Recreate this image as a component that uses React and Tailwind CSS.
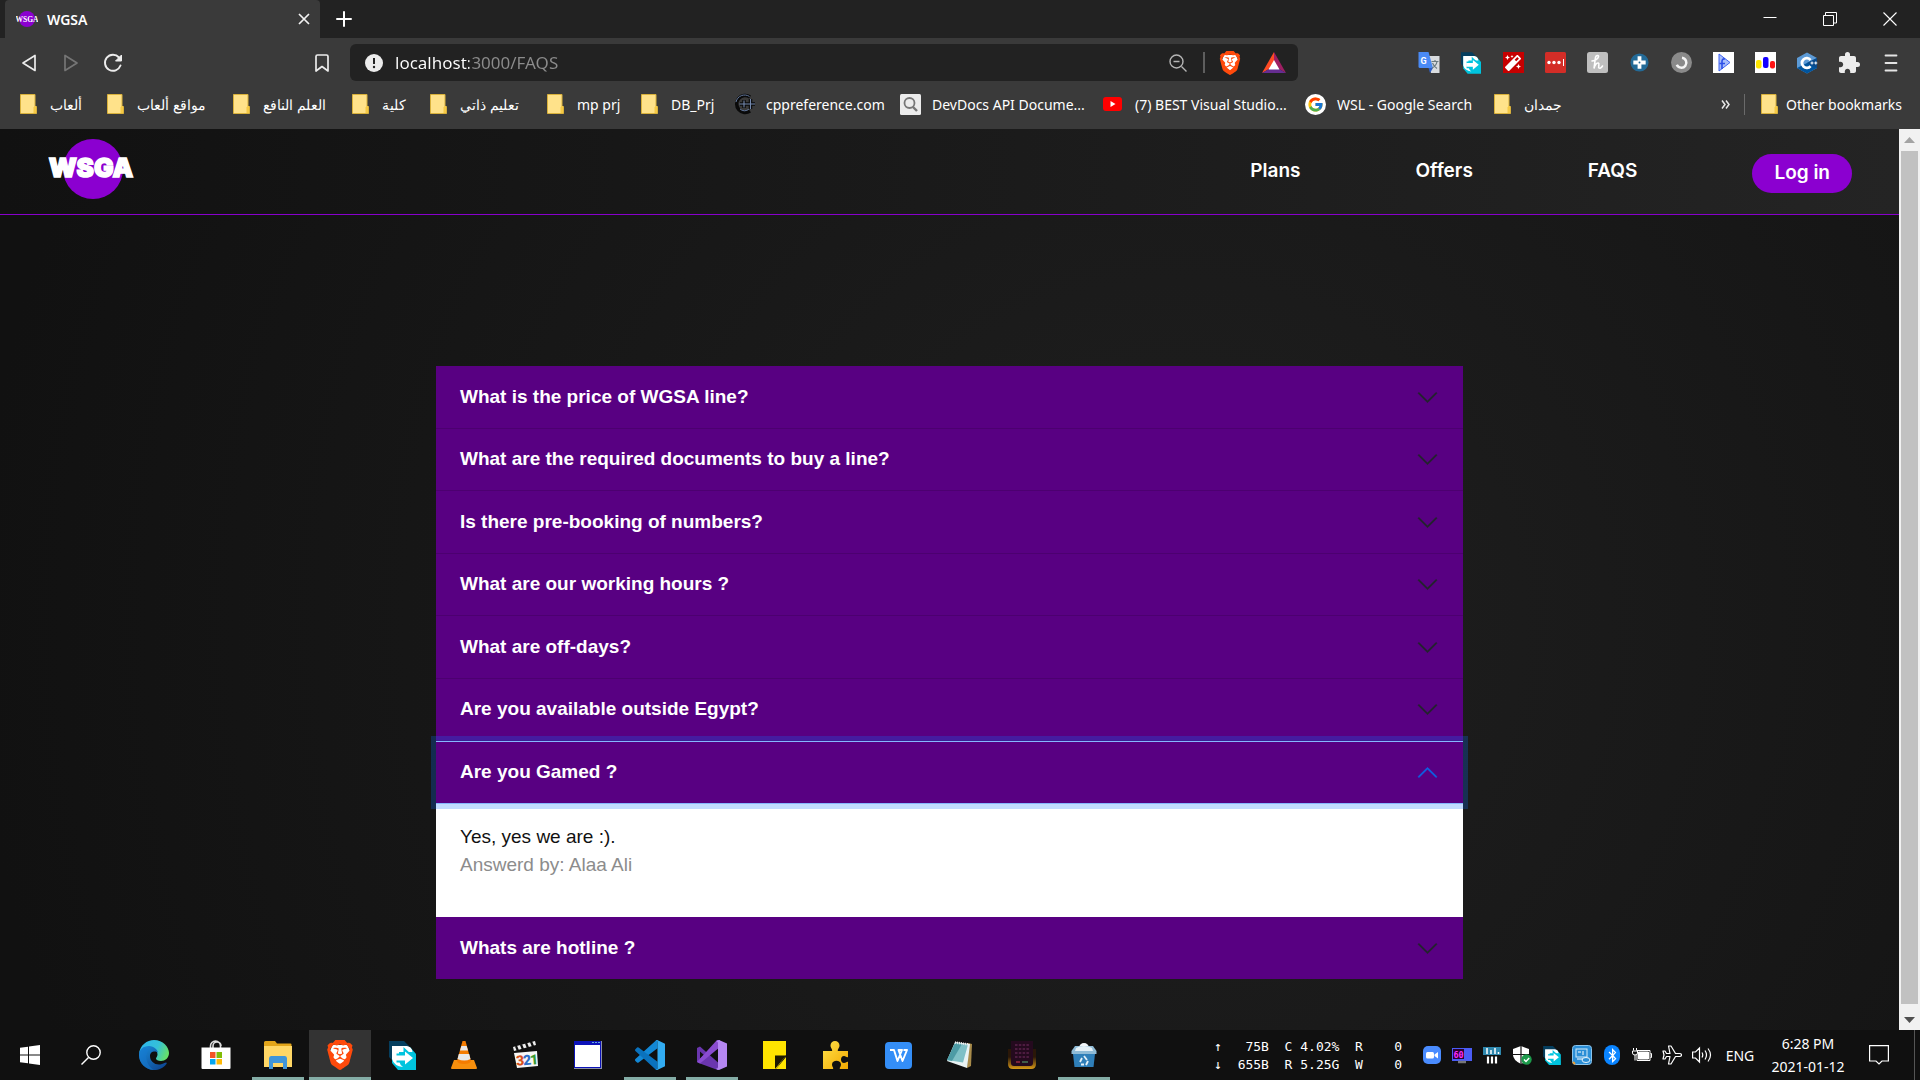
import React from "react";
import { SiBrave } from "react-icons/si";
import { FcGoogle } from "react-icons/fc";
import { MdExtension } from "react-icons/md";
import { FaMagic, FaBluetoothB } from "react-icons/fa";

/* ---------- shared icons ---------- */

function Folder() {
  return (
    <svg viewBox="0 0 17 20" className="h-5 w-[17px]">
      <path d="M.5.5h14.500v12h1.500v7H.5z" fill="#ffe28a" stroke="#d9b13b" />
      <path d="M13.500 19v-5.500l1-1.500h1.500v7z" fill="#f5c945" />
    </svg>
  );
}

function BraveLion({ className }) {
  return (
    <span className={`relative inline-flex items-center justify-center ${className}`}>
      <svg viewBox="0 0 24 24" className="absolute h-full w-full">
        <path d="M6 4h12l2 5-3 9-5 4-5-4-3-9z" fill="#fff" />
      </svg>
      <SiBrave className="relative h-full w-full text-[#ff4a0c]" />
    </span>
  );
}

function DownloadManager({ className }) {
  return (
    <svg viewBox="0 0 27 29" className={className}>
      <path d="M0 0h15l5 5v5H4v10l-4-4z" fill="#053e5e" />
      <path d="M3 6h18l6 7v16H9l-6-7z" fill="#00c4de" />
      <path d="M3 5h15q5 1 5.500 6H10v9q1 4 4 6-9-1-11-8z" fill="#fff" />
      <path d="M9 14h7v-4.500l8 7.500-8 7.500V20H9z" fill="#00c4de" stroke="#00c4de" strokeWidth="3" />
      <path d="M7 14.500h9v-4l8 6.500-8 6.500v-4H7z" fill="#fff" />
    </svg>
  );
}

/* ---------- browser icons ---------- */

const extensions = [
  {
    name: "Translate",
    icon: (
      <svg viewBox="0 0 22 22" className="size-[22px]">
        <path d="M9 4h12.500v17H13z" fill="#d9dcdf" />
        <path d="M.5 0h10l4.500 16H2a1.500 1.500 0 0 1-1.500-1.500z" fill="#4a8af4" />
        <path d="M10.500 16H15l-3 5z" fill="#2f5fc4" />
        <path d="M13.500 9.500h7M17 8v1.500M19 9.500c-.5 3-3 5.500-5 6.500M14.500 11c1 2.500 3 4.500 4.500 5.500" stroke="#6a7a80" strokeWidth="1.200" fill="none" />
        <text x="2.500" y="12" fontSize="9" fontWeight="700" fill="#fff" fontFamily="Roboto, sans-serif">G</text>
      </svg>
    ),
  },
  { name: "Free Download Manager", icon: <DownloadManager className="h-[22px] w-5" /> },
  {
    name: "Wand",
    icon: (
      <span className="flex size-[21px] items-center justify-center bg-[#c60000]">
        <FaMagic className="size-4 text-white" />
      </span>
    ),
  },
  {
    name: "LastPass",
    icon: (
      <svg viewBox="0 0 21 21" className="size-[21px]">
        <rect width="21" height="21" rx="1.500" fill="#d32d27" />
        <circle cx="4" cy="10.500" r="1.700" fill="#fff" />
        <circle cx="9" cy="10.500" r="1.700" fill="#fff" />
        <circle cx="14" cy="10.500" r="1.700" fill="#fff" />
        <path d="M18.500 7v7" stroke="#fff" />
      </svg>
    ),
  },
  {
    name: "Honey",
    icon: (
      <svg viewBox="0 0 21 21" className="size-[21px]">
        <rect width="21" height="21" rx="2.500" fill="#bfbfbf" />
        <path d="M5 9c3.500-.5 6.500-2.500 6.500-4.500 0-1.500-2.500-1.300-3 1L7 16.500c.5-3 2.500-6 4.300-5.500 1.700.5-.5 4 .7 5 1 .8 2.500-.5 3.500-2" stroke="#fff" strokeWidth="1.600" strokeLinecap="round" fill="none" />
      </svg>
    ),
  },
  {
    name: "Health",
    icon: (
      <svg viewBox="0 0 20 20" className="size-[19px]">
        <circle cx="10" cy="10" r="9.500" fill="#236a97" />
        <path d="M8 3.500h4V8h4.500v4H12v4.500H8V12H3.500V8H8z" fill="#fff" />
        <circle cx="10" cy="10" r="1" fill="#236a97" />
      </svg>
    ),
  },
  {
    name: "Night mode",
    icon: (
      <svg viewBox="0 0 21 21" className="size-[21px]">
        <circle cx="10.500" cy="10.500" r="10.500" fill="#8a8a8a" />
        <path d="M11 5.700a5 5 0 1 1-5.200 7" stroke="#f5f5f5" strokeWidth="2.500" fill="none" />
      </svg>
    ),
  },
  {
    name: "Formatter",
    icon: (
      <svg viewBox="0 0 21 21" className="size-[21px]">
        <rect width="21" height="21" fill="#fff" />
        <path d="M6 2l11 8.500L6 19z" fill="#a8bdfb" stroke="#3f63f2" />
        <path d="M9 17V9.500c0-2 1-3 3-2.500M6.500 11.500H12" stroke="#2c4fe8" strokeWidth="1.600" fill="none" />
      </svg>
    ),
  },
  {
    name: "Charts",
    icon: (
      <svg viewBox="0 0 21 21" className="size-[21px]">
        <rect width="21" height="21" fill="#fff" />
        <rect x="1" y="8" width="5.500" height="8.500" rx="2" fill="#ffe600" />
        <rect x="8" y="5" width="5.500" height="11" rx="2" fill="#1400ff" />
        <rect x="15" y="9" width="5" height="7.500" rx="2" fill="#ff1414" />
      </svg>
    ),
  },
  {
    name: "C++",
    icon: (
      <svg viewBox="0 0 22 22" className="size-[22px]">
        <path d="M11 .5l10 5.500v10l-10 5.500L1 16V6z" fill="#5c9ad6" />
        <path d="M1 16L21 6v10l-10 5.500z" fill="#00549d" />
        <path d="M11 11l10-5v10z" fill="#0a4a8a" />
        <path d="M14.500 8a4.800 4.800 0 1 0 0 6" stroke="#fff" strokeWidth="2.800" fill="none" />
        <path d="M14.500 11h3M16 9.500v3M18.300 11h3M19.800 9.500v3" stroke="#fff" strokeWidth="1" />
      </svg>
    ),
  },
  { name: "Extensions", icon: <MdExtension className="size-6 text-[#ececec]" /> },
  {
    name: "Menu",
    icon: (
      <svg viewBox="0 0 14 18" className="h-[18px] w-3.5" fill="none" stroke="#e4e4e4" strokeWidth="1.800" strokeLinecap="round">
        <path d="M1.500 1.500h11M1.500 9h11M1.500 16.500h11" />
      </svg>
    ),
  },
];

const bookmarks = [
  { label: "ألعاب", width: "w-[87px]", rtl: true },
  { label: "مواقع ألعاب", width: "w-[126px]", rtl: true },
  { label: "العلم النافع", width: "w-[119px]", rtl: true },
  { label: "كلية", width: "w-[78px]", rtl: true },
  { label: "تعليم ذاتي", width: "w-[117px]", rtl: true },
  { label: "mp prj", width: "w-[94px]" },
  { label: "DB_Prj", width: "w-[93px]" },
  {
    label: "cppreference.com",
    width: "w-[166px]",
    icon: (
      <svg viewBox="0 0 22 22" className="size-[22px]" fill="none">
        <path d="M16 4A8.500 8.500 0 1 0 16 18" stroke="#0a0a0a" strokeWidth="3.500" />
        <path d="M15.500 3.500A8.800 8.800 0 0 0 2 9M15 16A6.500 6.500 0 0 1 6 16" stroke="#62779c" />
        <path d="M6 11h15M10 7v8M16.500 6v10" stroke="#0a0a0a" strokeWidth="3.500" />
        <path d="M5.500 11h15.500M10 7.500v7M16.500 6v10" stroke="#7388ad" strokeWidth="1.100" />
      </svg>
    ),
  },
  {
    label: "DevDocs API Docume...",
    width: "w-[203px]",
    icon: (
      <svg viewBox="0 0 21 21" className="size-[21px]" fill="none">
        <rect width="21" height="21" rx="1.500" fill="#ececec" />
        <circle cx="9.500" cy="9" r="5" stroke="#777" strokeWidth="1.800" />
        <path d="M13 13l4 4" stroke="#777" strokeWidth="2.400" />
      </svg>
    ),
  },
  {
    label: "(7) BEST Visual Studio...",
    width: "w-[202px]",
    icon: (
      <svg viewBox="0 0 20 16" className="h-4 w-5">
        <rect width="19" height="14" y="1" rx="3" fill="#f00" />
        <path d="M7.500 5v6l5-3z" fill="#fff" />
      </svg>
    ),
  },
  {
    label: "WSL - Google Search",
    width: "w-[189px]",
    icon: (
      <span className="flex size-[21px] items-center justify-center rounded-full bg-white">
        <FcGoogle className="size-[17px]" />
      </span>
    ),
  },
  { label: "جمدان", width: "w-[90px]", rtl: true },
];

function TitleBar() {
  return (
    <div className="flex h-[38px] items-stretch bg-[#222222] pl-[5px]">
      <div className="flex w-[315px] items-center rounded-t-sm bg-[#3a3a3a] pl-[11px] pr-2">
        <svg viewBox="0 0 22 20" className="h-5 w-[22px]">
          <circle cx="11" cy="10" r="8" fill="#8b00d0" />
          <text x="11" y="12.500" textAnchor="middle" fontSize="7.500" fontWeight="900" fill="#fff" fontFamily="Liberation Serif, serif">WSGA</text>
        </svg>
        <span className="ml-[9px] flex-1 text-[14px] font-semibold text-white">WGSA</span>
        <button aria-label="Close tab" className="flex size-4 items-center justify-center">
          <svg viewBox="0 0 12 12" className="size-3" stroke="#f2f2f2" strokeWidth="1.700">
            <path d="M1 1l10 10M11 1L1 11" />
          </svg>
        </button>
      </div>
      <button aria-label="New tab" className="flex w-12 items-center justify-center">
        <svg viewBox="0 0 16 16" className="size-4" stroke="#fff" strokeWidth="2" strokeLinecap="round">
          <path d="M8 1v14M1 8h14" />
        </svg>
      </button>
      <div className="ml-auto flex text-white">
        <button aria-label="Minimize" className="flex w-[60px] items-center justify-center">
          <svg viewBox="0 0 14 14" className="size-3.5" stroke="currentColor"><path d="M.5 5.500h13" /></svg>
        </button>
        <button aria-label="Restore" className="flex w-[60px] items-center justify-center">
          <svg viewBox="0 0 14 14" className="size-3.5" stroke="currentColor" fill="none">
            <path d="M.5 3.500h10v10H.5zM2.500 3V.5h11v10.500H11" />
          </svg>
        </button>
        <button aria-label="Close" className="flex w-[60px] items-center justify-center">
          <svg viewBox="0 0 14 14" className="size-3.5" stroke="currentColor" strokeWidth="1.100"><path d="M.5.5l13 13M13.500.5l-13 13" /></svg>
        </button>
      </div>
    </div>
  );
}

function Toolbar() {
  return (
    <div className="flex h-[47px] items-center pt-0.5">
      <div className="flex flex-none items-center pl-2">
        <button aria-label="Back" className="flex w-[42px] items-center justify-center">
          <svg viewBox="0 0 16 18" className="h-[18px] w-4" fill="none" stroke="#ececec" strokeWidth="1.700" strokeLinejoin="round">
            <path d="M14 1.500v15L2 9z" />
          </svg>
        </button>
        <button aria-label="Forward" className="flex w-[42px] items-center justify-center">
          <svg viewBox="0 0 16 18" className="h-[18px] w-4" fill="none" stroke="#757575" strokeWidth="1.700" strokeLinejoin="round">
            <path d="M2 1.500v15L14 9z" />
          </svg>
        </button>
        <button aria-label="Reload" className="flex w-[42px] items-center justify-center">
          <svg viewBox="0 0 20 20" className="size-5" fill="none">
            <path d="M17.500 12.500A8 8 0 1 1 16 4.500" stroke="#ececec" strokeWidth="1.900" strokeLinecap="round" />
            <path d="M18.500 2v6h-6z" fill="#ececec" stroke="#ececec" strokeLinejoin="round" />
          </svg>
        </button>
      </div>
      <button aria-label="Bookmark" className="ml-[167px] flex w-[42px] items-center justify-center">
        <svg viewBox="0 0 14 18" className="h-[18px] w-3.5" fill="none" stroke="#ececec" strokeWidth="1.700" strokeLinejoin="round">
          <path d="M1 2.500A1.500 1.500 0 0 1 2.500 1h9A1.500 1.500 0 0 1 13 2.500V17l-6-4.500L1 17z" />
        </svg>
      </button>
      <div className="ml-[7px] flex h-[37px] min-w-0 flex-1 items-center rounded-md bg-[#222222] pl-[15px] pr-3">
        <svg viewBox="0 0 18 18" className="size-[18px] flex-none">
          <circle cx="9" cy="9" r="9" fill="#ececec" />
          <path d="M9 4v6" stroke="#222" strokeWidth="2" />
          <circle cx="9" cy="13" r="1.200" fill="#222" />
        </svg>
        <input
          aria-label="Address"
          defaultValue="localhost:3000/FAQS"
          className="ml-3 min-w-0 flex-1 bg-[linear-gradient(90deg,#fff_74px,#8c8c8c_74px)] bg-clip-text text-[17px] text-transparent outline-none"
        />
        <svg viewBox="0 0 18 18" className="size-[18px]" fill="none" stroke="#b5b5b5" strokeWidth="1.400">
          <circle cx="7.500" cy="7.500" r="6.500" />
          <path d="M4.500 7.500h6M12.500 12.500l5 5" />
        </svg>
        <span className="ml-4 h-[21px] w-0.5 bg-[#5e5e5e]" />
        <BraveLion className="ml-[13px] size-6" />
        <svg viewBox="0 0 24 21" className="ml-5 h-[21px] w-6">
          <path d="M12 0L0 21l12-7z" fill="#ff4b24" />
          <path d="M12 0l12 21-12-7z" fill="#9e1f63" />
          <path d="M0 21h24l-12-7z" fill="#662d91" />
          <path d="M12 8l-5.500 9.500h11z" fill="#fff" />
        </svg>
      </div>
      <div className="ml-[110px] flex flex-none pr-2">
        {extensions.map((e) => (
          <button key={e.name} aria-label={e.name} className="flex w-[42px] items-center justify-center">
            {e.icon}
          </button>
        ))}
      </div>
    </div>
  );
}

function BookmarksBar() {
  return (
    <nav aria-label="Bookmarks" className="flex h-11 items-center pb-1.5 pl-5 text-[14px] text-white">
      {bookmarks.map((b) => (
        <a key={b.label} href="#bookmark" className={`flex flex-none items-center ${b.width}`}>
          <span className={b.icon ? "flex w-8 flex-none items-center" : "flex w-[30px] flex-none items-center"}>{b.icon || <Folder />}</span>
          <span dir={b.rtl ? "rtl" : "ltr"} className="whitespace-nowrap">
            {b.label}
          </span>
        </a>
      ))}
      <div className="ml-auto flex items-center pr-[18px]">
        <button aria-label="More bookmarks" className="mr-[11px] flex size-4 items-center justify-center">
          <svg viewBox="0 0 9 9" className="size-[9px]" fill="none" stroke="#e8e8e8" strokeWidth="1.500">
            <path d="M1 .5l3 4-3 4M5 .5l3 4-3 4" />
          </svg>
        </button>
        <span className="mr-4 h-[21px] w-px bg-[#6a6a6a]" />
        <a href="#other" className="flex items-center gap-2">
          <Folder />
          <span>Other bookmarks</span>
        </a>
      </div>
    </nav>
  );
}

/* ---------- site ---------- */

const navLinks = ["Plans", "Offers", "FAQS"];

function SiteHeader() {
  return (
    <header className="flex h-[86px] items-center border-b border-[#8800cc] bg-linear-to-r from-[#111111] to-[#242424] pl-12 pr-[47px]">
      <a href="#home" aria-label="WSGA home" className="mb-1.5">
        <svg viewBox="0 0 88 62" className="h-[62px] w-[88px]">
          <circle cx="45" cy="31" r="30" fill="#8b00d0" />
          <text x="43" y="39" textAnchor="middle" fontSize="26" fontWeight="900" fill="#fff" stroke="#fff" strokeWidth="1.500" fontFamily="Inter, sans-serif">WSGA</text>
        </svg>
      </a>
      <nav aria-label="Main" className="ml-auto flex items-center gap-[115px] font-['Inter',sans-serif] text-[19px] font-semibold text-white">
        {navLinks.map((label) => (
          <a key={label} href={`#${label}`}>
            {label}
          </a>
        ))}
        <button className="mt-[3px] h-[39px] rounded-full bg-[#8b00d0] px-[22px]">Log in</button>
      </nav>
    </header>
  );
}

const questions = [
  "What is the price of WGSA line?",
  "What are the required documents to buy a line?",
  "Is there pre-booking of numbers?",
  "What are our working hours ?",
  "What are off-days?",
  "Are you available outside Egypt?",
  "Are you Gamed ?",
  "Whats are hotline ?",
];

function Chevron({ open }) {
  return (
    <svg viewBox="0 0 16 16" className={open ? "size-[23px] rotate-180 text-[#0c63e4]" : "size-[23px] text-[#212529]"} fill="currentColor" stroke="currentColor" strokeWidth=".3">
      <path fillRule="evenodd" d="M1.646 4.646a.5.5 0 0 1 .708 0L8 10.293l5.646-5.647a.5.5 0 0 1 .708.708l-6 6a.5.5 0 0 1-.708 0l-6-6a.5.5 0 0 1 0-.708z" />
    </svg>
  );
}

function Faq() {
  return (
    <section aria-label="Frequently asked questions" className="w-full max-w-[1027px] font-['Liberation_Sans',Arial,sans-serif] text-[19px]">
      {questions.map((q, i) => {
        const open = i === 6;
        return (
          <div key={q} className="group">
            <h2
              className={
                open
                  ? "relative z-10 h-[63px] border-y border-[#86b7fe] bg-[#580082] shadow-[0_0_0_5px_rgba(13,110,253,0.25)]"
                  : "h-[63px] border-b border-[#4c0070] bg-[#580082] group-even:h-[62px] group-last:h-[63px] group-last:border-b-0"
              }
            >
              <button aria-expanded={open} className="flex h-full w-full items-center justify-between px-6 text-left font-bold text-white">
                {q}
                <Chevron open={open} />
              </button>
            </h2>
            {open && (
              <div className="bg-white px-6 pt-[19px] pb-[38px] leading-7 text-[#111]">
                <p>Yes, yes we are :).</p>
                <p className="text-[#8c8c8c]">Answerd by: Alaa Ali</p>
              </div>
            )}
          </div>
        );
      })}
    </section>
  );
}

function Scrollbar() {
  return (
    <div className="flex w-[21px] flex-none flex-col items-center bg-[#f1f1f1]">
      <svg viewBox="0 0 21 22" className="h-[22px] w-[21px] flex-none"><path d="M5 14h11l-5.500-6z" fill="#a3a3a3" /></svg>
      <div className="w-[17px] flex-1 bg-[#c1c1c1]" />
      <svg viewBox="0 0 21 26" className="h-[26px] w-[21px] flex-none"><path d="M5 13h11l-5.500 6z" fill="#505050" /></svg>
    </div>
  );
}

/* ---------- taskbar ---------- */

const apps = [
  {
    name: "Microsoft Edge",
    icon: (
      <svg viewBox="0 0 30 30" className="size-[30px]">
        <defs>
          <linearGradient id="edgeTop" x1="0" x2="1" y1=".2" y2=".5">
            <stop stopColor="#2cb5ee" /><stop offset=".6" stopColor="#35c1d8" /><stop offset="1" stopColor="#66e06a" />
          </linearGradient>
          <linearGradient id="edgeLow" x1="0" x2="1" y1="0" y2="1">
            <stop stopColor="#1b8fdd" /><stop offset="1" stopColor="#0c3f8a" />
          </linearGradient>
        </defs>
        <path d="M0 14C1 5 8 0 15 0c9 0 15 7 15 13 0 5-4 8-8 8-3 0-5-1-5-2.500 0-1 1.500-2 1.500-4C18.500 10 14 8 10 8 5 8 1 11 0 14z" fill="url(#edgeTop)" />
        <path d="M0 15c0-5 4-9 10-9 5 0 9 4 9 7-2-2.500-8-2-8 3 0 6 6 10 12 8 2-.5 3-1.500 4-1.500s1 1 0 2C24.500 28 20 30 15 30 6.500 30 0 23 0 15z" fill="url(#edgeLow)" />
        <path d="M10 10c-5 5-3 15 5 20C6.500 30 0 23 0 15c0-3 2-6.500 5-8z" fill="#1678cf" opacity=".55" />
      </svg>
    ),
  },
  {
    name: "Microsoft Store",
    icon: (
      <svg viewBox="0 0 30 30" className="size-[30px]">
        <path d="M9.500 9V6a5 5 0 0 1 10 0v3M12 9V6a4 4 0 0 1 8 0" fill="none" stroke="#ddd" strokeWidth="1.600" />
        <path d="M.5 7.500h29V28q0 1-1 1h-27q-1 0-1-1z" fill="#fff" />
        <path d="M9 12h5.500v6H9z" fill="#f35325" /><path d="M15.500 12H21v6h-5.500z" fill="#81bc06" />
        <path d="M9 19h5.500v5.500H9z" fill="#05a6f0" /><path d="M15.500 19H21v5.500h-5.500z" fill="#ffba08" />
      </svg>
    ),
  },
  {
    name: "File Explorer",
    running: true,
    icon: (
      <svg viewBox="0 0 28 28" className="size-7">
        <path d="M0 1.500Q0 0 1.500 0H11l2 2.500h13.500q1 0 1 1V9H0z" fill="#e2a51a" />
        <path d="M0 5h28v21H0z" fill="#ffd766" />
        <path d="M5 17.500Q5 15 7 15h14q2 0 2 2.500V28h-4v-6H9v6H5z" fill="#3f95d9" />
      </svg>
    ),
  },
  { name: "Brave", running: true, active: true, icon: <BraveLion className="size-[30px]" /> },
  { name: "Free Download Manager", icon: <DownloadManager className="h-[29px] w-[27px]" /> },
  {
    name: "VLC",
    icon: (
      <svg viewBox="0 0 26 28" className="h-7 w-[26px]">
        <path d="M3 19h20l3 8q0 1-1 1H1q-1 0-1-1z" fill="#f78f0d" />
        <path d="M11.500 0h3L20 20q-1 3-7 3t-7-3z" fill="#f57c00" />
        <path d="M10.300 5h5.400l1.300 4.500H9zM7.800 13h10.400l1.300 5q-6 3-13 0z" fill="#e8e8e8" />
      </svg>
    ),
  },
  {
    name: "Media Player Classic",
    icon: (
      <svg viewBox="0 0 28 28" className="size-7">
        <path d="M1 6L23 0l1 4L2 10z" fill="#eee" />
        <path d="M4 5l2 5M9 3.500l2 5M14 2l2 5M19 .5l2 5" stroke="#101010" strokeWidth="2.200" />
        <path d="M2 12l23-2 1 15-21 2z" fill="#f7f7f7" />
        <g fontFamily="Roboto, sans-serif" fontSize="14" fontWeight="900" transform="rotate(-5 14 19)">
          <text x="4" y="24" fill="#d9521c">3</text><text x="11" y="24" fill="#2e6fc8">2</text><text x="18" y="24" fill="#3a9a32">1</text>
        </g>
      </svg>
    ),
  },
  {
    name: "Console",
    icon: (
      <svg viewBox="0 0 28 28" className="size-7">
        <path d="M0 0h28v28H0z" fill="#8a8fa8" /><path d="M0 0h27v27H0z" fill="#0c12b8" />
        <path d="M1 4h25v22H1z" fill="#fff" /><path d="M18 1.500h2M21 1.500h2M24 1.500h2" stroke="#6ad" />
      </svg>
    ),
  },
  {
    name: "Visual Studio Code",
    running: true,
    icon: (
      <svg viewBox="0 0 24 24" className="size-[30px]">
        <path d="M.3 15.250q-.6.700 0 1.450L1.650 18q.6.400 1.250 0L18 6.550V0h-.5q-.6.100-1 .5z" fill="#1288d6" />
        <path d="M.3 8.750q-.6-.7 0-1.450L1.650 6q.6-.4 1.250 0L18 17.450V24h-.5q-.6-.1-1-.5z" fill="#0a72bd" />
        <path d="M16.500 23.500q.7.600 1.700.3L24 21V3L18.200.2q-1-.3-1.700.3.800-.4 1.500.6v21.800q-.7 1-1.500.6z" fill="#32acf2" />
      </svg>
    ),
  },
  {
    name: "Visual Studio",
    running: true,
    icon: (
      <svg viewBox="0 0 30 30" className="size-[30px]">
        <path d="M0 8l3-1.500L21 22.500V30l-3-1L3 23.500l-3-1.500z" fill="#6a36ae" />
        <path d="M3 11.500v7l4-3.500z" fill="#101010" />
        <path d="M3 23.500L0 22l20-22 3 0v7z" fill="#8a4cd0" />
        <path d="M22 0l8 3.500v23L22 30q-2 0-3-1.500 2 .5 2-1.500V3q0-2-2-1.500z" fill="#b587f2" />
        <path d="M21 9.500v11L14.500 15z" fill="#101010" />
      </svg>
    ),
  },
  {
    name: "Sticky Notes",
    icon: (
      <svg viewBox="0 0 23 28" className="h-7 w-[23px]">
        <path d="M0 0h23v14L13 28H0z" fill="#ffe400" /><path d="M23 14.500H12V28z" fill="#1c1900" /><path d="M23 16v12H13z" fill="#ffe400" />
      </svg>
    ),
  },
  {
    name: "Puzzle",
    icon: (
      <svg viewBox="0 0 26 29" className="h-[29px] w-[26px]">
        <defs><linearGradient id="gold" x2="1" y2="1"><stop stopColor="#ffe14a" /><stop offset="1" stopColor="#f2a900" /></linearGradient></defs>
        <path d="M0 10h9c1-1-1.500-3-1.500-5.500a4.500 4.500 0 0 1 9 0C16.500 7 14 9 15 10h10v6c-1 1-2-1-4-1-4 0-4 7 0 7 2 0 3-2 4-1v7h-8c-1-1 1-2 1-4.500 0-5-9-5-9 0 0 2.500 2 3.500 1 4.500H0z" fill="url(#gold)" />
      </svg>
    ),
  },
  {
    name: "WPS Office",
    icon: (
      <svg viewBox="0 0 27 27" className="size-[27px]">
        <rect width="27" height="27" rx="4" fill="#348ef7" />
        <path d="M5 8h4l3.500 11L17 8h-3.500l4 11L22 8h-3.500" fill="none" stroke="#fff" strokeWidth="1.900" strokeLinejoin="round" />
      </svg>
    ),
  },
  {
    name: "Notepad",
    icon: (
      <svg viewBox="0 0 28 28" className="size-7">
        <path d="M22 2l4 1-1 22-4 2z" fill="#a88b4a" />
        <path d="M9 1l15 2-3 24L1 20z" fill="#e9f3f4" />
        <path d="M9 2l13 1.500-5 18L1 19z" fill="#7fc0c6" /><path d="M9 2l7 1L6 20l-5-1z" fill="#4d9ba5" />
        <path d="M9 1.500l14 2" stroke="#eee" strokeWidth="2.500" strokeDasharray="1 1" />
      </svg>
    ),
  },
  {
    name: "DOSBox",
    icon: (
      <svg viewBox="0 0 28 28" className="size-7">
        <defs><linearGradient id="dosFrame" x2="0" y2="1"><stop offset=".4" stopColor="#2a1708" /><stop offset="1" stopColor="#d99a18" /></linearGradient></defs>
        <path d="M0 8h28v15q0 5-5 5H5q-5 0-5-5z" fill="url(#dosFrame)" />
        <path d="M3 0h22v22q0 3-3 3H6q-3 0-3-3z" fill="#240a1e" />
        <path d="M7 4h14M7 8h14M7 12h14M7 16h14" stroke="#4d1c40" strokeWidth="2.200" strokeDasharray="2.500 1.300" />
        <path d="M8 21h4" stroke="#7a2238" strokeWidth="2" /><path d="M14 21h6" stroke="#3f5a48" strokeWidth="2" />
      </svg>
    ),
  },
  {
    name: "Uninstaller",
    running: true,
    icon: (
      <svg viewBox="0 0 26 28" className="h-7 w-[26px]">
        <circle cx="13" cy="7" r="5" fill="#f2f6f8" />
        <path d="M4 5h18l3.500 5v3H.5v-3z" fill="#8fbbd6" /><path d="M5 7q3-2 8-2t8 2l1 3H4z" fill="#e4f0f6" />
        <path d="M2 13h22l-1.500 13H3.500z" fill="#2f7fb9" />
        <path d="M13 15l3 4M17 20l-2 4M13 23.500H10M9 21l2-4" stroke="#e4f1f8" strokeWidth="1.800" />
      </svg>
    ),
  },
];

const tray = [
  {
    name: "Zoom",
    icon: (
      <svg viewBox="0 0 18 18" className="size-[18px]">
        <rect width="18" height="18" rx="5" fill="#4a8cff" /><rect x="3" y="6" width="8" height="6.500" rx="1.500" fill="#fff" /><path d="M11.500 8.500L15 6v6.500l-3.500-2.500z" fill="#fff" />
      </svg>
    ),
  },
  {
    name: "Refresh rate",
    icon: (
      <svg viewBox="0 0 20 17" className="h-[17px] w-5">
        <path d="M0 1h20v13H0z" fill="#4a5cf5" /><path d="M1 2h11v10H1z" fill="#2a0030" /><path d="M6 15h8" stroke="#777" strokeWidth="2.500" />
        <text x="1.500" y="10.500" fontSize="8.500" fontWeight="700" fill="#ff2bff" fontFamily="DejaVu Sans Mono, monospace">60</text>
      </svg>
    ),
  },
  {
    name: "Performance",
    icon: (
      <svg viewBox="0 0 18 18" className="size-[18px]">
        <path d="M0 1h18v8H0z" fill="#2e87ad" /><path d="M4 2v6M8 4v4M12 2v6M15.500 6v2" stroke="#fff" strokeWidth="1.500" /><path d="M5 10.500v7M9 10.500v7M13 10.500v7" stroke="#fff" strokeWidth="2.200" />
      </svg>
    ),
  },
  {
    name: "Windows Security",
    icon: (
      <svg viewBox="0 0 20 19" className="h-[19px] w-5">
        <path d="M9 0l8 3v6q0 5-8 9Q1 14 1 9V3z" fill="#fff" /><path d="M9 0v18M1 8.500h16" stroke="#111" strokeWidth="1.200" />
        <circle cx="14.500" cy="13.500" r="5.200" fill="#1c9a4b" /><path d="M12 13.500l2 2 3.200-3.500" stroke="#fff" strokeWidth="1.400" fill="none" />
      </svg>
    ),
  },
  { name: "Downloads", icon: <DownloadManager className="h-[19px] w-[18px]" /> },
  {
    name: "Intel Graphics",
    icon: (
      <svg viewBox="0 0 20 20" className="size-5" fill="none">
        <rect x=".5" y=".5" width="19" height="19" rx="3" fill="#2b8ed6" stroke="#8cc4ea" /><rect x="4" y="4" width="11" height="8" stroke="#d4ebfa" />
        <path d="M6 7h3M11 6v4M5 14h6" stroke="#fff" /><ellipse cx="14" cy="15" rx="4" ry="2.500" stroke="#e4f3fc" /><path d="M1 17l2 2" stroke="#f0a030" strokeWidth="2" />
      </svg>
    ),
  },
  {
    name: "Bluetooth",
    icon: (
      <span className="flex h-5 w-4 items-center justify-center rounded-full bg-[#0a84ff]">
        <FaBluetoothB className="size-[15px] text-white" />
      </span>
    ),
  },
  {
    name: "Battery",
    icon: (
      <svg viewBox="0 0 20 14" className="h-3.5 w-5" fill="none" stroke="#fff">
        <path d="M5 2.500h13v10H5zM18.500 5.500h1v4h-1" /><path d="M6.500 4h10v7h-10z" fill="#fff" /><path d="M1.500 0v2.500M4.500 0v2.500M.5 3h5v2q0 2-2.500 2t-2.500-2zM3 7v5.500" fill="#111" />
      </svg>
    ),
  },
  {
    name: "Airplane mode",
    icon: (
      <svg viewBox="0 0 20 20" className="size-5" fill="none" stroke="#fff" strokeWidth="1.200" strokeLinejoin="round">
        <path d="M8 8.500L6.500 1H9l4.500 7.500h4q2 0 2 1.500t-2 1.500h-4L9 19H6.500L8 11.500H4.500L3 14H1l1-4-1-4h2l1.500 2.500z" />
      </svg>
    ),
  },
  {
    name: "Volume",
    icon: (
      <svg viewBox="0 0 20 18" className="h-[18px] w-5" fill="none" stroke="#fff" strokeWidth="1.200">
        <path d="M.6 6h2.900L7.500 2v14l-4-4H.6zM10 6.500q1.500 2.500 0 5M13 4.500q3 4.500 0 9M16 2.500q5 6.500 0 13" />
      </svg>
    ),
  },
];

function Taskbar() {
  return (
    <footer className="flex h-[50px] flex-none items-stretch bg-[#101010] text-white">
      <button aria-label="Start" className="flex w-[60px] flex-none items-center justify-center">
        <svg viewBox="0 0 20 20" className="size-5" fill="#fff">
          <path d="M0 2.800L8 1.700v7.800H0zM9 1.500L20 0v9.500H9zM0 10.500h8v7.800L0 17.200zM9 10.500h11V20L9 18.500z" />
        </svg>
      </button>
      <button aria-label="Search" className="flex w-[61px] flex-none items-center justify-center">
        <svg viewBox="0 0 20 20" className="size-5" fill="none" stroke="#fff" strokeWidth="1.400">
          <circle cx="12.500" cy="7.500" r="6.700" /><path d="M7.500 12.500L.5 19.500" />
        </svg>
      </button>
      <div className="flex pl-0.5">
        {apps.map((a) => (
          <button
            key={a.name}
            aria-label={a.name}
            className={`relative flex w-[62px] flex-none items-center justify-center ${a.active ? "bg-[#333333]" : ""}`}
          >
            {a.icon}
            {a.running && <span className={`absolute bottom-0 h-[3px] bg-[#84ada6] ${a.active ? "inset-x-0" : "inset-x-[5px]"}`} />}
          </button>
        ))}
      </div>
      <pre className="ml-auto self-center pt-0.5 pr-[15px] font-['DejaVu_Sans_Mono',monospace] text-[13px] leading-[18px]">
        {"↑   75B  C 4.02%  R    0\n↓  655B  R 5.25G  W    0"}
      </pre>
      <div className="flex items-stretch">
        {tray.map((t) => (
          <button key={t.name} aria-label={t.name} className="flex w-[30px] items-center justify-center">
            {t.icon}
          </button>
        ))}
      </div>
      <button className="w-[46px] text-center text-[14px]">ENG</button>
      <button className="w-[90px] text-center text-[14px] leading-[23px]">
        <span className="block">6:28 PM</span>
        <span className="block">2021-01-12</span>
      </button>
      <button aria-label="Notifications" className="flex w-[52px] items-center justify-center">
        <svg viewBox="0 0 20 20" className="size-5" fill="none" stroke="#fff" strokeWidth="1.200">
          <path d="M.6.6h18.800v15.400H13l-3 3-3-3H.6z" />
        </svg>
      </button>
      <div className="ml-[9px] w-[6px] border-l border-[#555]" />
    </footer>
  );
}

export default function App() {
  return (
    <div className="flex min-h-screen flex-col bg-[#111] font-['Noto_Sans','Open_Sans',sans-serif]">
      <TitleBar />
      <div className="bg-[#3a3a3a]">
        <Toolbar />
        <BookmarksBar />
      </div>
      <div className="flex flex-1">
        <div className="flex min-w-0 flex-1 flex-col bg-[radial-gradient(circle_at_62%_55%,#1f1f1f,#111111_1200px)]">
          <SiteHeader />
          <main className="flex flex-1 justify-center px-6 pt-[151px] pb-[50px]">
            <Faq />
          </main>
        </div>
        <Scrollbar />
      </div>
      <Taskbar />
    </div>
  );
}
